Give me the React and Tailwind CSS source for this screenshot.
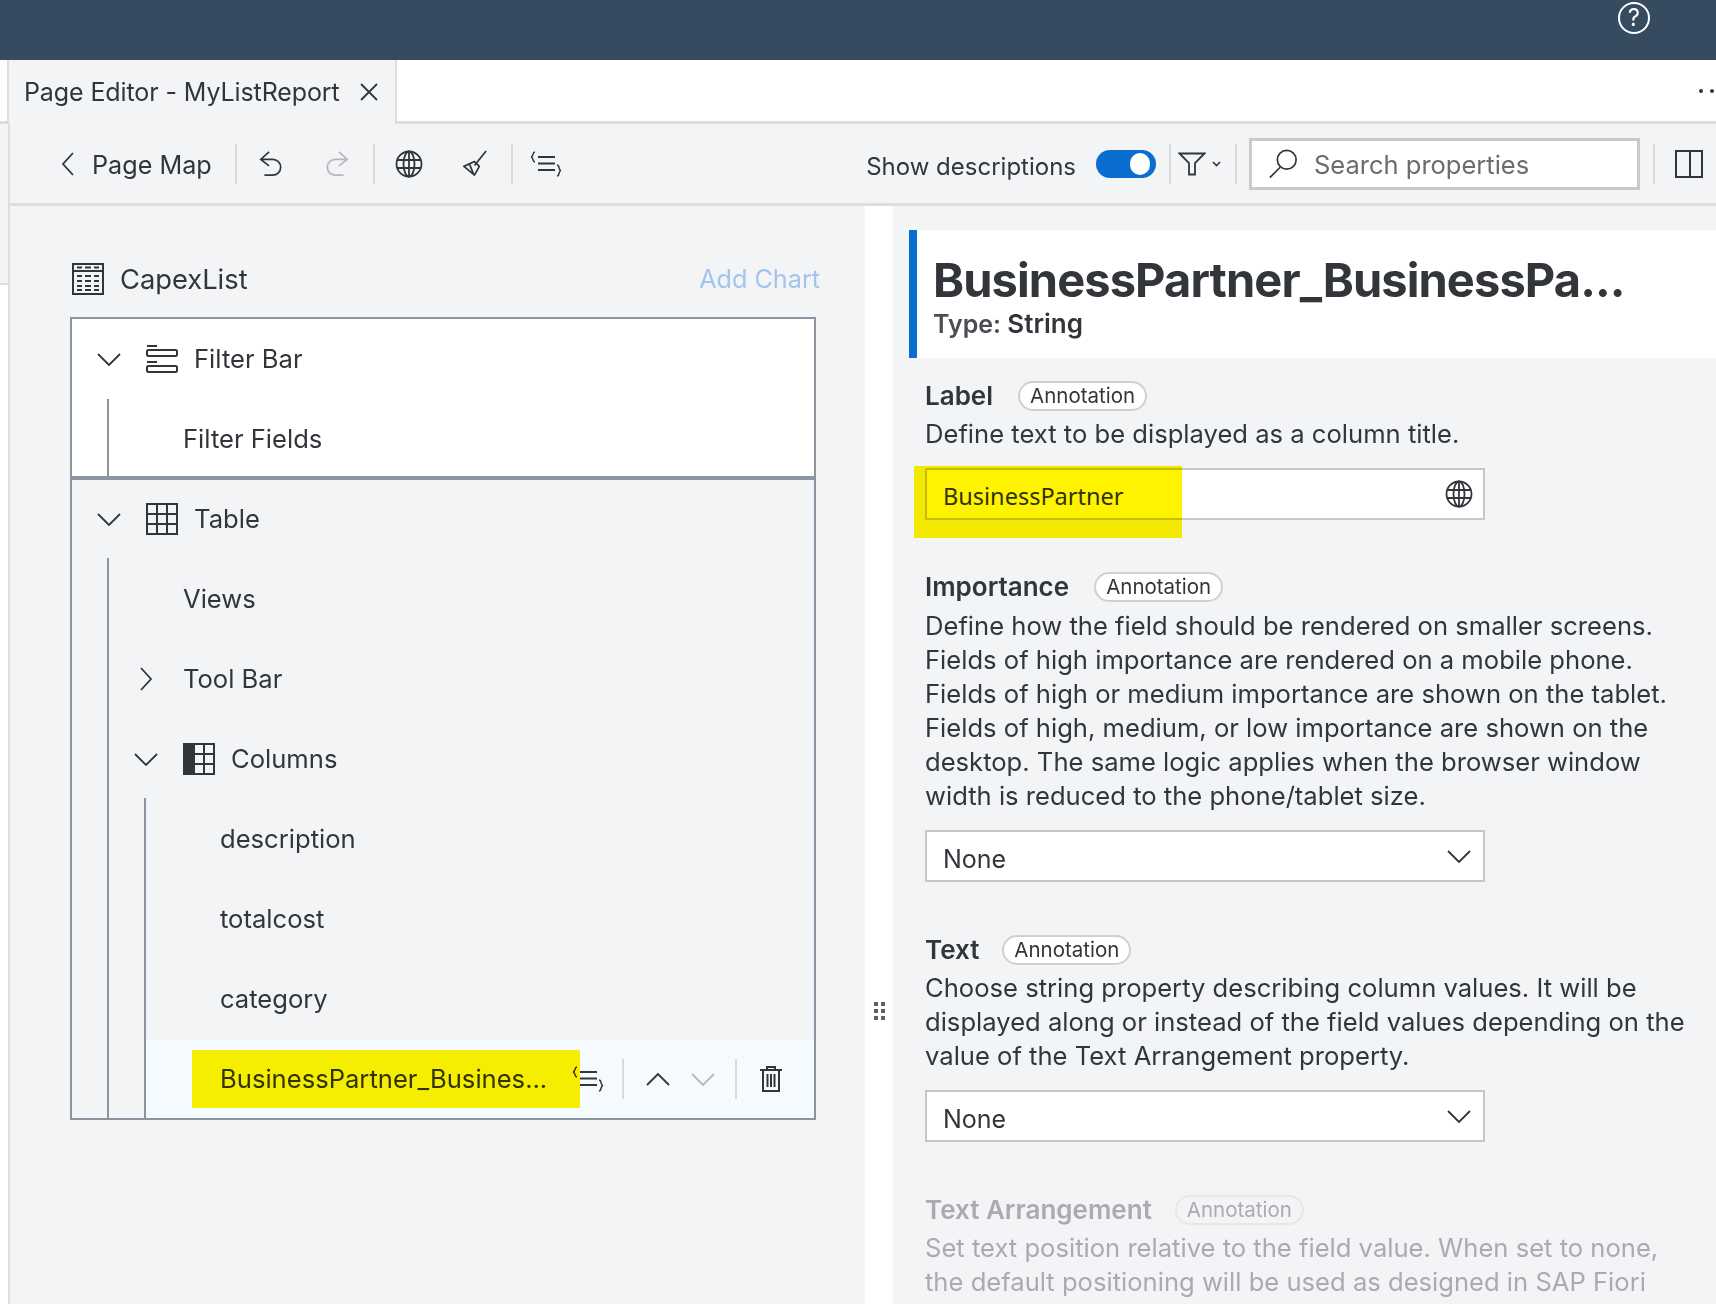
const Globe = ({ className }) => (
  <svg viewBox="0 0 28 28" fill="none" stroke="currentColor" strokeWidth="1.8" className={className}>
    <circle cx="14" cy="14" r="12.5" />
    <ellipse cx="14" cy="14" rx="5.5" ry="12.5" />
    <path d="M14 1.500v25M2.200 10h23.600M2.200 18h23.600" />
  </svg>
);

const Outline = ({ className }) => (
  <svg viewBox="0 0 32 26" fill="none" stroke="currentColor" strokeWidth="2" className={className}>
    <path d="M5 1C2 1 4 5.500 1 6c3 .5 1 5 4 5" strokeWidth="1.500" />
    <path d="M8 6h17M8 12.500h17M8 19h17" />
    <path d="M27 14c3 0 1 5 4 5.500-3 .5-1 5.500-4 5.500" strokeWidth="1.500" />
  </svg>
);

const Brush = ({ className }) => (
  <svg viewBox="0 0 28 28" fill="none" stroke="currentColor" strokeWidth="1.8" className={className}>
    <path d="M26 1 14 16M14 12l5 5-5 9-11-9 11-5ZM9 15l4 10" strokeLinejoin="round" />
  </svg>
);

const ChevDown = ({ className = 'w-[24px] h-[13px]' }) => (
  <svg viewBox="0 0 24 13" fill="none" stroke="currentColor" strokeWidth="1.8" className={`shrink-0 ${className}`}>
    <path d="m1 1 11 11L23 1" />
  </svg>
);

const ChevUp = ({ className = 'w-[24px] h-[13px]' }) => (
  <svg viewBox="0 0 24 13" fill="none" stroke="currentColor" strokeWidth="1.8" className={`shrink-0 ${className}`}>
    <path d="m1 12 11-11 11 11" />
  </svg>
);

const ChevRight = ({ className = 'w-[12px] h-[24px]' }) => (
  <svg viewBox="0 0 12 24" fill="none" stroke="currentColor" strokeWidth="1.8" className={`shrink-0 ${className}`}>
    <path d="m1 1 10 11L1 23" />
  </svg>
);

const ChevLeft = ({ className = 'w-[12px] h-[24px]' }) => (
  <svg viewBox="0 0 12 24" fill="none" stroke="currentColor" strokeWidth="1.8" className={`shrink-0 ${className}`}>
    <path d="M11 1 1 12l10 11" />
  </svg>
);

const Toggle = () => (
  <div className="w-[60px] h-[28px] shrink-0 rounded-full bg-[#0a6ed1] flex items-center justify-end pr-[6px]">
    <div className="w-[20px] h-[22px] rounded-full bg-white" />
  </div>
);

const Sep = () => <div className="w-[2px] h-[40px] shrink-0 bg-[#d9dadc]" />;

const Badge = ({ muted }) => (
  <span className={`h-[30px] px-[10px] rounded-full border-2 flex items-center text-[20.500px] ${muted ? 'border-[#e6e7e9] text-[#a9abae]' : 'bg-white border-[#cfd0d2] text-[#32363a]'}`}>
    Annotation
  </span>
);

const Select = () => (
  <div className="w-[560px] h-[52px] border-2 border-[#c6c7c9] bg-white flex items-center justify-between pl-[16px] pr-[12px] text-[25px]">
    <span className="pt-[5px]">None</span>
    <ChevDown />
  </div>
);

function Row({ indent, top, children }) {
  return (
    <div className={`h-[80px] flex items-center ${top}`} style={{ paddingLeft: indent }}>
      {children}
    </div>
  );
}

export default function App() {
  return (
    <div className="w-[1716px] h-[1304px] overflow-hidden bg-white text-[#32363a] font-['Inter','Liberation_Sans',sans-serif] flex flex-col">
      {/* Shell bar */}
      <div className="h-[60px] shrink-0 bg-[#364b60] flex items-center justify-end pr-[66px]">
        <div className="w-[32px] h-[32px] mb-[24px] rounded-full border-2 border-white text-white text-[24px] flex items-center justify-center">?</div>
      </div>

      {/* Tabs */}
      <div className="h-[64px] shrink-0 flex border-b-[3px] border-[#dcdddf]">
        <div className="w-[9px] shrink-0 border-r-2 border-[#dcdddf]" />
        <div className="w-[388px] h-[64px] shrink-0 bg-[#f3f4f6] border-r-2 border-[#dcdddf] flex items-center pl-[15px] text-[25px]">
          <span className="tracking-[-0.1px] pt-[2px]">Page Editor - MyListReport</span>
          <svg viewBox="0 0 18 18" fill="none" stroke="currentColor" strokeWidth="1.8" className="w-[18px] h-[18px] ml-[20px]">
            <path d="m1 1 16 16M17 1 1 17" />
          </svg>
        </div>
        <div className="flex-1 flex justify-end items-center gap-[7px] pr-[2px]">
          <span className="w-[4px] h-[4px] rounded-full bg-[#32363a]" />
          <span className="w-[4px] h-[4px] rounded-full bg-[#32363a]" />
        </div>
      </div>

      <div className="flex-1 flex min-h-0">
        <div className="w-[10px] shrink-0 border-r-2 border-[#dcdddf] flex flex-col">
          <div className="h-[161px] border-b-2 border-[#dcdddf] bg-[#f3f4f6]" />
        </div>
        <div className="flex-1 flex flex-col min-w-0">
          {/* Toolbar */}
          <div className="h-[82px] shrink-0 bg-[#f3f4f6] border-b-[3px] border-[#dcdddf] flex items-center pr-[13px]">
            <ChevLeft className="w-[12px] h-[24px] ml-[52px]" />
            <span className="ml-[18px] text-[25.200px] w-[143px] pt-[5px]">Page Map</span>
            <Sep />
            <div className="w-[66px] flex justify-center">
              <svg viewBox="0 0 28 30" fill="none" stroke="currentColor" strokeWidth="1.8" className="w-[26px] h-[28px]">
                <path d="M13 2 4 10l9 7M4 10h13a8.500 8.500 0 0 1 0 17H8" />
              </svg>
            </div>
            <div className="w-[70px] flex justify-center text-[#b5b7ba]">
              <svg viewBox="0 0 28 30" fill="none" stroke="currentColor" strokeWidth="1.8" className="w-[26px] h-[28px]">
                <path d="m15 2 9 8-9 7M24 10H11a8.500 8.500 0 0 0 0 17h9" />
              </svg>
            </div>
            <Sep />
            <div className="w-[67px] flex justify-center"><Globe className="w-[28px] h-[28px]" /></div>
            <div className="w-[65px] mr-[4px] flex justify-center"><Brush className="w-[27px] h-[27px]" /></div>
            <Sep />
            <div className="ml-[17px]"><Outline className="w-[32px] h-[26px]" /></div>

            <div className="flex-1" />
            <span className="text-[24px] mr-[20px] pt-[6px]">Show descriptions</span>
            <Toggle />
            <div className="ml-[13px]"><Sep /></div>
            <svg viewBox="0 0 28 24" fill="none" stroke="currentColor" strokeWidth="1.8" className="w-[28px] h-[24px] ml-[7px] shrink-0">
              <path d="M1.500 1.500h25L17 11v11.500h-6V11L1.500 1.500Z" />
            </svg>
            <svg viewBox="0 0 9 6" fill="none" stroke="currentColor" strokeWidth="1.6" className="w-[9px] h-[6px] ml-[6px] shrink-0">
              <path d="m1 1 3.500 3.500L8 1" />
            </svg>
            <div className="ml-[14px]"><Sep /></div>
            <div className="ml-[12px] w-[391px] h-[52px] shrink-0 border-[3px] border-[#c9cacc] bg-white flex items-center pl-[16px] gap-[16px]">
              <svg viewBox="0 0 32 32" fill="none" stroke="currentColor" strokeWidth="1.8" className="w-[30px] h-[31px]">
                <circle cx="20" cy="12" r="10" />
                <path d="M13 20 2 31" />
              </svg>
              <span className="text-[25.500px] text-[#6a6d70] pt-[4px]">Search properties</span>
            </div>
            <div className="ml-[13px]"><Sep /></div>
            <svg viewBox="0 0 28 28" fill="none" stroke="currentColor" strokeWidth="2" className="w-[28px] h-[28px] ml-[20px] shrink-0">
              <path d="M1 1h26v26H1zM15 1v26" />
            </svg>
          </div>

          <div className="flex-1 flex min-h-0">
            {/* Page map tree */}
            <div className="w-[855px] shrink-0 bg-[#f3f4f6] pl-[60px] pt-[43px]">
              <div className="w-[755px] h-[60px] flex items-center pl-[2px]">
                <svg viewBox="0 0 32 32" fill="none" stroke="currentColor" strokeWidth="2" className="w-[32px] h-[32px]">
                  <path d="M1 1h30v30H1zM1 8h30M5 4.500h5M13 4.500h6M22 4.500h5M5 13h5M13 13h6M22 13h5M5 18h5M13 18h6M22 18h5M5 23h5M13 23h6M22 23h5M5 27h5M13 27h6M22 27h5" />
                </svg>
                <span className="ml-[16px] text-[27.300px] pt-[2px]">CapexList</span>
                <span className="ml-auto mr-[5px] text-[25.200px] text-[#a3c5ec] pt-[2px]">Add Chart</span>
              </div>
              <div className="w-[746px] h-[803px] mt-[8px] border-2 border-[#8a95a1] text-[25.600px] overflow-hidden relative">
                <div className="bg-white border-b-4 border-[#8a95a1] h-[161px] relative">
                  <div className="absolute left-[35px] top-[80px] bottom-0 w-[2px] bg-[#8a95a1]" />
                  <Row indent={25}>
                    <ChevDown />
                    <svg viewBox="0 0 32 28" fill="none" stroke="currentColor" strokeWidth="2" className="w-[32px] h-[28px] ml-[25px]">
                      <path d="M1 1h10" />
                      <rect x="1" y="5" width="30" height="6" rx="1.500" />
                      <path d="M1 17h10" />
                      <rect x="1" y="21" width="30" height="6" rx="1.500" />
                    </svg>
                    <span className="ml-[16px]">Filter Bar</span>
                  </Row>
                  <Row indent={111}>Filter Fields</Row>
                </div>
                <div className="relative">
                  <div className="absolute left-[35px] top-[78px] h-[700px] w-[2px] bg-[#8a95a1]" />
                  <div className="absolute left-[72px] top-[318px] h-[400px] w-[2px] bg-[#8a95a1]" />
                  <Row indent={25} top="pb-[2px]">
                    <ChevDown />
                    <svg viewBox="0 0 32 32" fill="none" stroke="currentColor" strokeWidth="2" className="w-[32px] h-[32px] ml-[25px]">
                      <path d="M1 1h30v30H1zM11 1v30M21 1v30M1 11h30M1 21h30" />
                    </svg>
                    <span className="ml-[16px]">Table</span>
                  </Row>
                  <Row indent={111} top="pb-[2px]">Views</Row>
                  <Row indent={68} top="pb-[2px]">
                    <ChevRight />
                    <span className="ml-[31px]">Tool Bar</span>
                  </Row>
                  <Row indent={62} top="pb-[2px]">
                    <ChevDown />
                    <svg viewBox="0 0 32 32" fill="none" stroke="currentColor" strokeWidth="2" className="w-[32px] h-[32px] ml-[25px]">
                      <path d="M1 1h10v30H1z" fill="currentColor" />
                      <path d="M11 1h20v30H11zM21 1v30M11 11h20M11 21h20" />
                    </svg>
                    <span className="ml-[16px]">Columns</span>
                  </Row>
                  <Row indent={148} top="pb-[2px]">description</Row>
                  <Row indent={148} top="pb-[2px]">totalcost</Row>
                  <Row indent={148} top="pb-[2px]">category</Row>
                  <div className="relative h-[80px] ml-[74px] bg-[#f5fafe] flex items-center pl-[74px] pb-[2px]">
                    <span className="w-[352px] shrink-0">BusinessPartner_Busines...</span>
                    <Outline className="w-[32px] h-[26px] shrink-0" />
                    <div className="ml-[18px]"><Sep /></div>
                    <ChevUp className="w-[24px] h-[13px] ml-[22px]" />
                    <ChevDown className="w-[24px] h-[13px] ml-[21px] text-[#b5b7ba]" />
                    <div className="ml-[20px]"><Sep /></div>
                    <svg viewBox="0 0 22 26" fill="none" stroke="currentColor" strokeWidth="2" className="w-[22px] h-[26px] ml-[23px] shrink-0">
                      <path d="M0 4h22M7 4V1h8v3M3 4v21h16V4M7.500 8v13M11 8v13M14.500 8v13" />
                    </svg>
                    <div className="absolute left-[46px] top-[10px] w-[388px] h-[58px] bg-[#fff300] mix-blend-multiply" />
                  </div>
                </div>
              </div>
            </div>

            {/* Sash */}
            <div className="w-[28px] shrink-0 bg-white flex justify-center pt-[796px]">
              <div className="grid grid-cols-2 gap-[3px] h-[18px]">
                {[0, 1, 2, 3, 4, 5].map((i) => (
                  <span key={i} className="w-[4px] h-[4px] bg-[#5c6066]" />
                ))}
              </div>
            </div>

            {/* Properties */}
            <div className="flex-1 bg-[#f3f4f6] pt-[24px] pl-[16px] min-w-0">
              <div className="h-[128px] bg-white border-l-8 border-[#0a6ed1] pl-[16px] pt-[25px]">
                <div className="text-[47px] leading-[50px] font-bold tracking-[-0.9px] whitespace-nowrap">BusinessPartner_BusinessPa...</div>
                <div className="text-[25px] leading-[30px] font-semibold text-[#4a4e52] mt-[4px]">Type: <span className="text-[26px] text-[#32363a]">String</span></div>
              </div>

              <div className="pl-[16px] text-[25.600px] leading-[34px]">
                <div className="flex items-center gap-[25px] mt-[21px] h-[34px]">
                  <span className="font-semibold text-[26px]">Label</span>
                  <Badge />
                </div>
                <p className="mt-[4px]">Define text to be displayed as a column title.</p>
                <div className="relative w-[560px] h-[52px] mt-[17px] border-2 border-[#c6c7c9] bg-white flex items-center justify-between pl-[16px] pr-[10px]">
                  <span className="font-['Noto_Sans',sans-serif] text-[23.500px] pt-[3px]">BusinessPartner</span>
                  <Globe className="w-[28px] h-[28px]" />
                  <div className="absolute left-[-13px] top-[-4px] w-[268px] h-[72px] bg-[#fff300] mix-blend-multiply" />
                </div>

                <div className="flex items-center gap-[25px] mt-[50px] h-[34px]">
                  <span className="font-semibold text-[26px]">Importance</span>
                  <Badge />
                </div>
                <p className="mt-[5px] w-[770px]">
                  Define how the field should be rendered on smaller screens. Fields of high importance are rendered on a mobile phone. Fields of high or medium importance are shown on the tablet. Fields of high, medium, or low importance are shown on the desktop. The same logic applies when the browser window width is reduced to the phone/tablet size.
                </p>
                <div className="mt-[17px]"><Select /></div>

                <div className="flex items-center gap-[23px] mt-[51px] h-[34px]">
                  <span className="font-semibold text-[26px]">Text</span>
                  <Badge />
                </div>
                <p className="mt-[4px] w-[770px]">
                  Choose string property describing column values. It will be displayed along or instead of the field values depending on the value of the Text Arrangement property.
                </p>
                <div className="mt-[17px]"><Select /></div>

                <div className="flex items-center gap-[23px] mt-[51px] h-[34px] text-[#a9abae]">
                  <span className="font-semibold text-[26px]">Text Arrangement</span>
                  <Badge muted />
                </div>
                <p className="mt-[4px] w-[770px] text-[#a9abae]">
                  Set text position relative to the field value. When set to none, the default positioning will be used as designed in SAP Fiori
                </p>
              </div>
            </div>
          </div>
        </div>
      </div>
    </div>
  );
}
